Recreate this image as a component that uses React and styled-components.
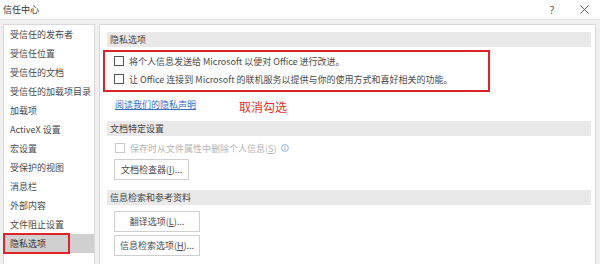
import React from 'react'
import styled, { createGlobalStyle } from 'styled-components'

const Global = createGlobalStyle`
  html, body { margin: 0; padding: 0; }
  body {
    font-family: "Noto Sans CJK SC", "Noto Sans", sans-serif;
    background: #f0f0f0;
  }
`;

const navItems = [
  '受信任的发布者',
  '受信任位置',
  '受信任的文档',
  '受信任的加载项目录',
  '加载项',
  'ActiveX 设置',
  '宏设置',
  '受保护的视图',
  '消息栏',
  '外部内容',
  '文件阻止设置',
  '隐私选项',
];

function Underlined({ text, k }) {
  // draws the access key with an underline, e.g. 文档检查器(I)...
  const i = text.indexOf(k);
  return (
    <>
      {text.slice(0, i)}
      <u>{k}</u>
      {text.slice(i + 1)}
    </>
  );
}

function InfoIcon() {
  return (
    <svg width="8" height="8" viewBox="0 0 8 8">
      <circle cx="4" cy="4" r="3.4" fill="none" stroke="#7a9ccf" strokeWidth="0.8" />
      <rect x="3.6" y="3.4" width="0.8" height="2.6" fill="#7a9ccf" />
      <rect x="3.6" y="1.9" width="0.8" height="0.8" fill="#7a9ccf" />
    </svg>
  );
}

export default function App() {
  return (
    <Window>
      <Global />
      <TitleBar>
        <Title>信任中心</Title>
        <TitleButtons>
          <Help>?</Help>
          <Close>
            <svg width="9" height="9" viewBox="0 0 9 9">
              <path d="M0.5 0.5 L8.5 8.5 M8.5 0.5 L0.5 8.5" stroke="#555" strokeWidth="0.9" />
            </svg>
          </Close>
        </TitleButtons>
      </TitleBar>
      <Body>
        <Nav>
          {navItems.map((t, i) =>
            i === navItems.length - 1 ? (
              <NavItem key={t} $selected>
                <Marked>{t}</Marked>
              </NavItem>
            ) : (
              <NavItem key={t}>{t}</NavItem>
            )
          )}
        </Nav>
        <Content>
          <SectionHeader>隐私选项</SectionHeader>
          <RedGroup>
            <CheckRow>
              <Box />
              <span>将个人信息发送给 Microsoft 以便对 Office 进行改进。</span>
            </CheckRow>
            <CheckRow>
              <Box />
              <span>让 Office 连接到 Microsoft 的联机服务以提供与你的使用方式和喜好相关的功能。</span>
            </CheckRow>
          </RedGroup>
          <LinkRow>
            <Link>阅读我们的隐私声明</Link>
            <Note>取消勾选</Note>
          </LinkRow>
          <SectionHeader $top={7}>文档特定设置</SectionHeader>
          <CheckRow $disabled $indent={8} $top={3}>
            <Box $disabled />
            <span>保存时从文件属性中删除个人信息(<u>S</u>)</span>
            <InfoIcon />
          </CheckRow>
          <ButtonStack $top={2}>
            <Button>
              <Underlined text="文档检查器(I)..." k="I" />
            </Button>
          </ButtonStack>
          <SectionHeader $top={10}>信息检索和参考资料</SectionHeader>
          <ButtonStack $top={6}>
            <Button $width={86}>
              <Underlined text="翻译选项(L)..." k="L" />
            </Button>
            <Button $width={86}>
              <Underlined text="信息检索选项(H)..." k="H" />
            </Button>
          </ButtonStack>
        </Content>
      </Body>
    </Window>
  );
}

const Window = styled.div`
  width: 600px;
  height: 264px;
  overflow: hidden;
  display: flex;
  flex-direction: column;
  background: #f0f0f0;
  color: #4a4a4a;
  font-size: 9px;
`;

const TitleBar = styled.div`
  height: 19px;
  flex: none;
  display: flex;
  align-items: center;
  padding: 0 0 0 3px;
  background: #fff;
  border-bottom: 1px solid #e2e2e2;
`;

const Title = styled.div`
  flex: 1;
  font-size: 9px;
  color: #333;
`;

const TitleButtons = styled.div`
  display: flex;
  align-items: center;
`;

const Help = styled.div`
  width: 32px;
  text-align: center;
  font-family: "Noto Sans", sans-serif;
  font-size: 10px;
  color: #555;
`;

const Close = styled.div`
  width: 32px;
  display: flex;
  justify-content: center;
`;

const Body = styled.div`
  flex: 1;
  display: flex;
  gap: 4px;
  padding: 4px 4px 0 3px;
  min-height: 0;
`;

const Nav = styled.div`
  width: 90px;
  flex: none;
  background: #fff;
  border: 1px solid #d8d8d8;
  border-bottom: none;
`;

const NavItem = styled.div`
  height: 19px;
  display: flex;
  align-items: center;
  padding-left: ${p => (p.$selected ? 0 : 6)}px;
  background: ${p => (p.$selected ? '#d0d0d0' : 'transparent')};
  white-space: nowrap;
`;

const Marked = styled.div`
  width: 67px;
  height: 21px;
  margin-left: -1px;
  box-sizing: border-box;
  border: 2px solid #e0242a;
  display: flex;
  align-items: center;
  padding-left: 5px;
  color: #333;
`;

const Content = styled.div`
  flex: 1;
  background: #fff;
  border: 1px solid #d8d8d8;
  border-bottom: none;
  padding: 7px 4px 0 7px;
`;

const SectionHeader = styled.div`
  height: 15px;
  margin-top: ${p => p.$top || 0}px;
  background: #e9e9e9;
  display: flex;
  align-items: center;
  padding-left: 3px;
  color: #444;
`;

const RedGroup = styled.div`
  width: 387px;
  margin: 3px 0 0 -4px;
  box-sizing: border-box;
  border: 2px solid #e0242a;
  padding: 0 0 2px 9px;
`;

const CheckRow = styled.div`
  height: 18px;
  margin-top: ${p => p.$top || 0}px;
  display: flex;
  align-items: center;
  gap: 5px;
  padding-left: ${p => p.$indent || 0}px;
  color: ${p => (p.$disabled ? '#b4b4b4' : '#4a4a4a')};
  white-space: nowrap;
`;

const Box = styled.span`
  width: 8px;
  height: 8px;
  flex: none;
  border: 1px solid ${p => (p.$disabled ? '#c8c8c8' : '#555')};
  background: #fff;
`;

const LinkRow = styled.div`
  height: 20px;
  margin-top: 2px;
  display: flex;
  align-items: center;
  padding-left: 8px;
`;

const Link = styled.a`
  color: #3a6cc0;
  text-decoration: underline;
  cursor: pointer;
`;

const Note = styled.span`
  margin: 4px 0 0 43px;
  font-size: 12px;
  color: #e6302c;
`;

const ButtonStack = styled.div`
  display: flex;
  flex-direction: column;
  align-items: flex-start;
  gap: 3px;
  margin-top: ${p => p.$top || 0}px;
  padding-left: 7px;
`;

const Button = styled.div`
  height: 21px;
  box-sizing: border-box;
  ${p => (p.$width ? `width: ${p.$width}px;` : 'padding: 0 6px;')}
  display: flex;
  align-items: center;
  justify-content: center;
  border: 1px solid #cfcfcf;
  background: #fff;
  color: #4a4a4a;
  white-space: nowrap;
`;
